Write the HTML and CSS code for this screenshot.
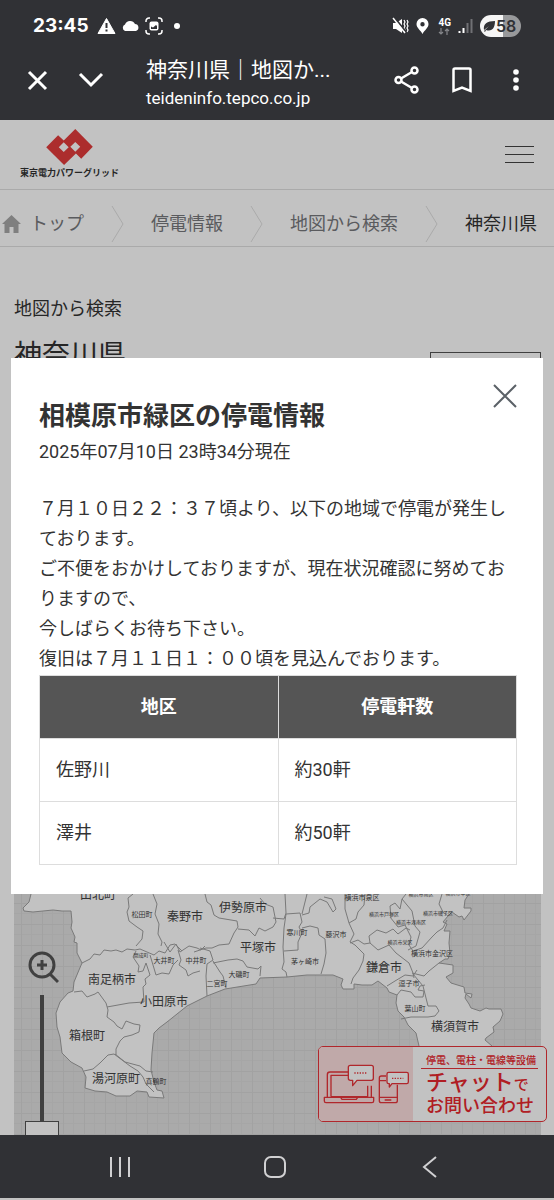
FILE: index.html
```html
<!DOCTYPE html>
<html lang="ja">
<head>
    <meta charset="UTF-8">
    <meta name="viewport" content="width=device-width, initial-scale=1.0">
    <title>神奈川県｜地図から検索</title>
    <link rel="stylesheet" href="styles.css">
</head>
<body>
    <div class="phone-top">
        <div class="status-bar">
            <span class="time">23:45</span>
            <svg width="19" height="18" viewBox="0 0 19 18"><path d="M9.500 1.500L18 16.500H1z" fill="#fff" stroke="#fff" stroke-linejoin="round"/><path d="M9.500 6v5M9.500 12.500v2" stroke="#303135" stroke-width="2"/></svg>
            <svg width="19" height="18" viewBox="0 0 19 18"><path d="M4 14a3.500 3.500 0 0 1 0-6.500 5.500 5.500 0 0 1 10-.5 3.600 3.600 0 0 1 1 7z" fill="#fff"/></svg>
            <svg width="18" height="18" viewBox="0 0 18 18"><path d="M1 5V4a3 3 0 0 1 3-3h1M13 1h1a3 3 0 0 1 3 3v1M17 13v1a3 3 0 0 1-3 3h-1M5 17H4a3 3 0 0 1-3-3v-1" fill="none" stroke="#fff" stroke-width="1.500"/><rect x="4.500" y="4.500" width="9" height="9" rx="2" fill="#fff"/><path d="M6 12V9.500l2 1 3-2.500 1 1v3z" fill="#303135"/></svg>
            <span class="dot"></span>
            <span class="status-right">
                <svg width="17" height="18" viewBox="0 0 17 18"><path d="M1 6h3l6-4v14l-6-4H1z" fill="#fff"/><path d="M12 3l1 2-1 2 1 2-1 2 1 2-1 2M15 3l1 2-1 2 1 2-1 2 1 2-1 2" fill="none" stroke="#fff" stroke-width="1.200"/><path d="M2 0l12 15" stroke="#303135" stroke-width="2"/><path d="M1 1l12 15" stroke="#fff" stroke-width="1.500"/></svg>
                <svg width="13" height="18" viewBox="0 0 13 18"><path fill-rule="evenodd" d="M6.500 1A6 6 0 0 0 .5 7c0 4 4 6 6 10 2-4 6-6 6-10a6 6 0 0 0-6-6zm0 4a2.200 2.200 0 1 1 0 4.400 2.200 2.200 0 0 1 0-4.400z" fill="#fff"/></svg>
                <span class="network">4G
                    <svg width="12" height="7" viewBox="0 0 12 7"><path d="M3 0v6M1 4l2 2 2-2M9 7V1M7 3l2-2 2 2" fill="none" stroke="#85868a" stroke-width="1.200"/></svg>
                </span>
                <svg width="15" height="18" viewBox="0 0 15 18"><path d="M1.500 14v2M5.500 11v5" stroke="#fff" stroke-width="2"/><path d="M9.500 6v10M13.500 2v14" stroke="#707175" stroke-width="2"/></svg>
                <span class="battery">
                    <svg width="12" height="12" viewBox="0 0 12 12"><path d="M1 10C0 4 4 1 12 1c0 7-3 11-9 9l-1 2-1-1 5-5z" fill="#303135"/></svg>58
                </span>
            </span>
        </div>
        <div class="browser-bar">
            <button type="button" aria-label="閉じる"><svg width="24" height="24" viewBox="0 0 24 24"><path d="M4 4l17 17M21 4L4 21"/></svg></button>
            <button type="button" aria-label="最小化"><svg width="28" height="24" viewBox="0 0 28 24"><path d="M3 6l11 11L25 6"/></svg></button>
            <div class="page-title">
                <div class="title">神奈川県｜地図か...</div>
                <div class="url">teideninfo.tepco.co.jp</div>
            </div>
            <div class="browser-actions">
                <button type="button" aria-label="共有"><svg width="26" height="28" viewBox="0 0 26 28"><g stroke-width="2.500"><path d="M7 12.500L18 6M7 15.500L18 22"/><circle cx="4.500" cy="14" r="3"/><circle cx="20.500" cy="4.500" r="3"/><circle cx="20.500" cy="23.500" r="3"/></g></svg></button>
                <button type="button" aria-label="ブックマーク"><svg width="20" height="26" viewBox="0 0 20 26"><path d="M1.500 3q0-1.500 1.500-1.500h14q1.500 0 1.500 1.500v21L10 20.500 1.500 24z" stroke-width="2.500"/></svg></button>
                <button type="button" aria-label="メニュー"><svg width="6" height="24" viewBox="0 0 6 24"><g fill="#fff" stroke="none"><circle cx="3" cy="4" r="2.800"/><circle cx="3" cy="12" r="2.800"/><circle cx="3" cy="20" r="2.800"/></g></svg></button>
            </div>
        </div>
    </div>

    <div class="screen">
        <header class="site-header">
            <a href="#" class="logo">
                <svg width="47" height="36" viewBox="0 0 141 109"><path fill-rule="evenodd" d="M0 55L36 19 53 35 88 0 141 54 106 90 90 74 54 109zM38 55L53 70 68 55 53 40zM73 54L88 69 103 54 88 39z" fill="#e23c3c"/></svg>
                <span>東京電力パワーグリッド</span>
            </a>
            <button type="button" class="hamburger" aria-label="メニュー"><span></span><span></span><span></span></button>
        </header>

        <nav class="breadcrumb">
            <a href="#" class="home"><svg width="19" height="18" viewBox="0 0 19 18"><path d="M9.500 0L19 9h-2.500v9h-5v-6h-4v6h-5V9H0z"/></svg>トップ</a>
            <svg width="13" height="38" viewBox="0 0 13 38"><path d="M1 1l11 18L1 37"/></svg>
            <a href="#">停電情報</a>
            <svg width="13" height="38" viewBox="0 0 13 38"><path d="M1 1l11 18L1 37"/></svg>
            <a href="#">地図から検索</a>
            <svg width="13" height="38" viewBox="0 0 13 38"><path d="M1 1l11 18L1 37"/></svg>
            <span>神奈川県</span>
        </nav>

        <main class="content">
            <p class="sub">地図から検索</p>
            <div class="heading-row">
                <h1>神奈川県</h1>
                <button type="button" class="update">更新</button>
            </div>

            <div class="map">
                <svg class="map-image" viewBox="14 440 527 720">
                    <defs>
                        <pattern id="grid" width="21" height="21" patternUnits="userSpaceOnUse">
                            <path d="M10.500 0v21M0 10.500h21" stroke="#dbdbdb" fill="none"/>
                            <path d="M.5 0v21M0 .5h21" stroke="#d5d5d5" fill="none"/>
                        </pattern>
                    </defs>
                    <rect x="14" y="440" width="527" height="720" fill="#e0e0e0"/>
                    <rect x="14" y="440" width="527" height="720" fill="url(#grid)"/>
                    <path class="land" d="M40 600L31 894 29 902 23 908 24 911 33 912 53 910 62 911 71 911 72 922 71 928 75 937 74 942 77 943 77 953 82 963 79 970 74 982 73 991 68 993 60 1002 56 1013 57 1027 60 1037 62 1053 71 1062 82 1068 86 1077 85 1088 95 1091 107 1092 116 1096 130 1096 137 1091 147 1092 149 1097 164 1098 162 1091 157 1090 154 1082 151 1070 152 1053 154 1033 159 1028 167 1022 187 1006 207 996 225 989 256 984 260 978 287 977 307 975 333 975 343 979 341 985 343 989 354 989 354 984 362 985 372 985 378 981 387 988 389 992 397 995 396 1003 398 1011 404 1017 408 1025 416 1033 419 1046 430 1065 480 1062 492 1046 485 1040 486 1038 494 1032 493 1027 500 1021 503 1014 501 1009 489 1009 486 1008 480 1011 471 1008 469 1004 465 998 466 994 471 998 472 994 465 993 464 987 451 983 446 977 453 973 453 965 439 963 445 959 448 959 450 953 449 943 450 931 444 931 447 924 443 922 448 916 452 912 459 917 462 916 464 920 471 911 471 908 464 908 465 900 469 894 475 600z"/>
                    <g class="border">
                        <path d="M133 894l-5 4 1 9-2 5 2 9 8 6 6 4-1 8-6 7M153 894l4 10-2 10 4 10-1 10 4 8-1 4M82 963l8-4 4-5 6 1 4-5 7 1 5-1 6 2 5-3 8 1 5-1 7 3 7 3 5-4 6 2 5-8 5-1 7 7M136 951l-3 6 6 9-1 6 5-1 3-8 4 12-5 4 1 5-3 3 1 15-15 1-22 4M74 992l8-1 5 6 8-3 3-2 8 11 2 7-1 7 7 5 3 4 5 3 4-8 8 3 6 1-1 7-7 3-8 2-4 4-4 8 0 6M150 955l6 20 6-2 7 1 4-9 5-5M164 942l6 10 6-8 4 8 9-6 8 2 4 2 4-4M178 950l3 10-2 5 7 5 2 6 5-3 7-2M84 1071l9-2 7-6 8-8 6-1 16 12 8 5 5 6 3 7 8 8M115 1054l10 8 15 4 6 5 7 1"/>
                        <path d="M205 894l2 8 4 3 3 10 5 3 18 3 1 6-4 6-5 11-10 1-7 3-6 0-12 4M238 929l11 1 6 6 4-8 6 3 8-4 3-5-3-15-8-3-5-6M273 918l11 1 2-6-1-19M286 914l-2 14-1 19 1 15-2 7 4 3 1 5M286 914l14-1 2 9-3 5 3 6-4 9 0 8-14 1M200 948l10 3 3 9-6 4-1 12 1 20M213 961l7 11 3 4 3 12M213 963l15-3 9-1 6 2 4 6 11 2 3-3-1 10M302 915l7-2 1-6 10-8 7 3 6 10 3-3-4-10-8-2M302 928l8-2 8 2 1 7 6 4 1 14-2 11-3 10M307 894l-5 20M345 894l0 15 4 14 5 11-4 8 5 3 9 9-1 7-4 9-6 8-2 6"/>
                        <path d="M349 923l7-4 2-7 6-7 1-11M350 943l8-3 6 4 6-1-1-7 8-6 9 3 7-4 5 5 8-6 4 2M370 943l8 7 11-5 7 8 13 10 4 10 1 5M391 918l-1-12 5-3 5 6 2-10 4-5M390 917l8 10 7-2 6 12-2 8 4 6 9-3 10-11 5-5 6-4 4-8M402 899l10 12 3 15 5 6-4 14-8 4M412 973l12 3 5-5 10-8M387 986l8-5 10-6 8 1 4-6M413 974l10 12 5 20 8 0 3 5-4 5-7 1-17 0-10 2M397 995l4-5 10 2 4 5 8 0 1-6-6-1 2-4 5-1M442 894l-3 10 4 8 5 4"/>
                    </g>
                    <g class="city">
                        <text x="98" y="899">山北町</text>
                        <text x="185" y="921">秦野市</text>
                        <text x="243" y="912">伊勢原市</text>
                        <text x="258" y="952">平塚市</text>
                        <text x="112" y="984">南足柄市</text>
                        <text x="164" y="1006">小田原市</text>
                        <text x="87" y="1040">箱根町</text>
                        <text x="116" y="1083">湯河原町</text>
                        <text x="384" y="972">鎌倉市</text>
                        <text x="455" y="1031">横須賀市</text>
                    </g>
                    <g class="town">
                        <text x="142" y="917">松田町</text>
                        <text x="164" y="963">大井町</text>
                        <text x="196" y="963">中井町</text>
                        <text x="217" y="986">二宮町</text>
                        <text x="239" y="977">大磯町</text>
                        <text x="156" y="1084">真鶴町</text>
                        <text x="297" y="935">寒川町</text>
                        <text x="336" y="937">藤沢市</text>
                        <text x="305" y="964">茅ヶ崎市</text>
                        <text x="362" y="900">横浜市泉区</text>
                        <text x="432" y="956">横浜市金沢区</text>
                        <text x="409" y="986">逗子市</text>
                        <text x="415" y="1011">葉山町</text>
                    </g>
                    <g class="ward">
                        <text x="141" y="957">開成町</text>
                        <text x="384" y="916">横浜市戸塚区</text>
                        <text x="411" y="924">横浜市港南区</text>
                        <text x="438" y="915">横浜市磯子区</text>
                        <text x="400" y="944">横浜市栄区</text>
                        <text x="421" y="896">横浜市南区</text>
                        <text x="458" y="895">横浜市中区</text>
                    </g>
                </svg>
                <div class="map-controls">
                    <button type="button" aria-label="拡大"><svg width="34" height="34" viewBox="0 0 34 34"><g fill="none" stroke="#555" stroke-width="3"><circle cx="17" cy="15" r="12"/><path d="M25 24l8 8M17 10v10M12 15h10"/></g></svg></button>
                    <input type="range" min="0" max="10" value="0" aria-label="地図の縮尺">
                </div>
            </div>
        </main>

        <a href="#" class="chat">
            <span class="chat-icon">
                <svg width="86" height="42" viewBox="0 0 258 126">
                    <g fill="none" stroke="#e8343a" stroke-width="4" stroke-linejoin="round">
                        <path d="M13 103V35q0-8 8-8h55M145 68v35M24 101V37h52M134 68v33H24"/>
                        <path d="M4 103h148v11q0 5-5 5H9q-5 0-5-5zM53 103l4 6h43l4-6"/>
                        <path d="M82 7h63q6 0 6 6v33q0 6-6 6h-43L89 68V52h-7q-6 0-6-6V13q0-6 6-6z" fill="#fff"/>
                        <path d="M189 39h-14q-6 0-6 6v68q0 6 6 6h42q6 0 6-6V65M169 53h20M169 103h54M185 111h20"/>
                        <path d="M197 28h54q5 0 5 5v24q0 5-5 5h-44l-8 10V62h-2q-5 0-5-5V33q0-5 5-5z" fill="#fff"/>
                        <path d="M94 30h38M207 46h34" stroke-dasharray="4 4"/>
                    </g>
                </svg>
            </span>
            <span class="chat-text">
                <small>停電、電柱・電線等設備</small>
                <strong>チャット<em>で</em></strong>
                <b>お問い合わせ</b>
            </span>
        </a>

        <div class="overlay">
            <div class="modal" role="dialog" aria-labelledby="modal-title">
                <button type="button" class="close" aria-label="閉じる"><svg width="24" height="24" viewBox="0 0 24 24"><path d="M1 1l22 22M23 1L1 23" stroke="#5b6167" stroke-width="2"/></svg></button>
                <h2 id="modal-title">相模原市緑区の停電情報</h2>
                <p class="date">2025年07月10日 23時34分現在</p>
                <p class="message">７月１０日２２：３７頃より、以下の地域で停電が発生しております。<br>ご不便をおかけしておりますが、現在状況確認に努めておりますので、<br>今しばらくお待ち下さい。<br>復旧は７月１１日１：００頃を見込んでおります。</p>
                <table>
                    <thead>
                        <tr><th>地区</th><th>停電軒数</th></tr>
                    </thead>
                    <tbody>
                        <tr><td>佐野川</td><td>約30軒</td></tr>
                        <tr><td>澤井</td><td>約50軒</td></tr>
                    </tbody>
                </table>
            </div>
        </div>
    </div>

    <div class="nav-bar">
        <button type="button" aria-label="履歴"><svg width="24" height="24" viewBox="0 0 24 24"><path d="M3 2v20M12 2v20M21 2v20"/></svg></button>
        <button type="button" aria-label="ホーム"><svg width="24" height="24" viewBox="0 0 24 24"><rect x="2" y="2" width="20" height="20" rx="6"/></svg></button>
        <button type="button" aria-label="戻る"><svg width="24" height="24" viewBox="0 0 24 24"><path d="M18 2L6 12l12 10"/></svg></button>
    </div>
</body>
</html>
```
FILE: styles.css
```css
* {
    box-sizing: border-box;
}
body {
    font-family: Roboto, "Noto Sans CJK JP", sans-serif;
    font-size: 18px;
    line-height: 30px;
    color: #333;
    background-color: #c2c2c2;
    margin: 0;
    padding-bottom: 2px;
    height: 100vh;
    display: flex;
    flex-direction: column;
}
h1, h2, p {
    margin: 0;
}
a {
    color: inherit;
    text-decoration: none;
}
button {
    background: none;
    border: none;
    padding: 0;
    font: inherit;
    color: inherit;
    cursor: pointer;
}
svg {
    display: block;
    flex-shrink: 0;
}

/* barras del teléfono */
.phone-top {
    background-color: #303135;
    color: white;
    height: 120px;
    flex-shrink: 0;
    padding-top: 12px;
}
.status-bar {
    display: flex;
    align-items: center;
    gap: 5px;
    height: 28px;
    padding: 0 33px;
}
.time {
    font-family: Inter, sans-serif;
    font-size: 19px;
    font-weight: 700;
    margin-right: 3px;
}
.dot {
    width: 6px;
    height: 6px;
    border-radius: 50%;
    background-color: white;
    margin-left: 6px;
}
.status-right {
    display: flex;
    align-items: center;
    gap: 7px;
    margin-left: auto;
}
.network {
    font-size: 10px;
    font-weight: bold;
    line-height: 10px;
    text-align: center;
    margin-left: 2px;
}
.battery {
    display: flex;
    align-items: center;
    height: 22px;
    width: 41px;
    padding-left: 3px;
    border-radius: 11px;
    background: linear-gradient(90deg, #f5f5f5 56%, #98999b 56%);
    color: #303135;
    font-family: Inter, sans-serif;
    font-size: 16px;
    font-weight: 600;
    gap: 1px;
}
.browser-bar {
    display: flex;
    align-items: center;
    height: 80px;
    padding: 0 35px 0 25px;
}
.browser-bar svg {
    fill: none;
    stroke: white;
    stroke-width: 3;
}
.browser-bar button + button {
    margin-left: 28px;
}
.page-title {
    margin-left: 41px;
    padding-top: 6px;
    white-space: nowrap;
}
.page-title .title {
    font-size: 21px;
}
.page-title .url {
    font-size: 17px;
    line-height: 26px;
}
.browser-actions {
    display: flex;
    align-items: center;
    margin-left: auto;
}
.browser-actions button + button {
    margin-left: 32px;
}
.browser-actions button:last-child {
    margin-left: 41px;
}
.nav-bar {
    display: flex;
    align-items: center;
    justify-content: space-around;
    background-color: #303135;
    height: 63px;
    flex-shrink: 0;
    padding: 0 46px 0 42px;
}
.nav-bar svg {
    fill: none;
    stroke: #d0d0d2;
    stroke-width: 2;
}

/* página */
.screen {
    position: relative;
    flex: 1;
    min-height: 0;
    overflow: hidden;
    background-color: white;
}
.site-header {
    display: flex;
    justify-content: space-between;
    align-items: center;
    height: 70px;
    padding: 0 20px;
    border-bottom: 1px solid #e0e0e0;
}
.logo {
    display: flex;
    flex-direction: column;
    align-items: center;
    font-size: 9px;
    line-height: 16px;
    font-weight: bold;
}
.hamburger {
    display: flex;
    flex-direction: column;
    gap: 7px;
    width: 29px;
}
.hamburger span {
    height: 1px;
    background-color: #444;
}
.breadcrumb {
    display: flex;
    align-items: center;
    gap: 27px;
    height: 57px;
    padding: 12px 2px 0;
    border-bottom: 1px solid #e0e0e0;
    color: #77787c;
    white-space: nowrap;
}
.breadcrumb svg path {
    stroke: #e0e0e0;
    fill: none;
}
.breadcrumb .home {
    display: flex;
    align-items: center;
    gap: 9px;
}
.breadcrumb .home path {
    fill: #a8a8a8;
    stroke: none;
}
.breadcrumb span {
    color: #333;
}
.content {
    padding: 47px 13px 0 14px;
}
.heading-row {
    display: flex;
    justify-content: space-between;
    align-items: flex-start;
    padding-top: 12px;
    height: 116px;
}
h1 {
    font-size: 28px;
    font-weight: normal;
    line-height: 40px;
}
.update {
    border: 1px solid #555;
    width: 111px;
    height: 50px;
    margin-top: 16px;
}
.map {
    position: relative;
}
.map-image {
    width: 100%;
    font-family: "Noto Sans CJK JP", sans-serif;
    text-anchor: middle;
    fill: #444;
}
.land {
    fill: white;
    stroke: #a0a0a0;
}
.border {
    fill: none;
    stroke: #a0a0a0;
}
.city {
    font-size: 12px;
}
.town {
    font-size: 7px;
}
.ward {
    font-size: 5px;
}
.map-controls {
    position: absolute;
    left: 11px;
    top: 510px;
    display: flex;
    flex-direction: column;
    align-items: center;
    gap: 11px;
}
.map-controls input {
    appearance: none;
    writing-mode: vertical-lr;
    direction: rtl;
    width: 34px;
    height: 155px;
    margin: 0;
    background: linear-gradient(#555, #555) center / 4px 100% no-repeat;
}
.map-controls input::-webkit-slider-thumb {
    appearance: none;
    width: 34px;
    height: 29px;
    background-color: white;
    border: 1px solid #555;
}
.chat {
    position: absolute;
    right: 7px;
    bottom: 13px;
    display: flex;
    height: 76px;
    width: 229px;
    border: 1px solid #e8343a;
    border-radius: 5px;
    background-color: white;
    color: #e8282e;
    font-weight: 500;
    overflow: hidden;
}
.chat-icon {
    display: flex;
    align-items: center;
    justify-content: center;
    width: 94px;
    background-color: #fddede;
}
.chat-text {
    flex: 1;
    padding: 7px 8px 0;
    white-space: nowrap;
}
.chat-text small {
    display: block;
    font-size: 10px;
    line-height: 14px;
    padding-left: 5px;
    border-bottom: 1px solid #e8343a;
}
.chat-text strong, .chat-text b {
    display: block;
    padding-left: 5px;
    font-size: 18px;
    line-height: 22px;
    font-weight: 500;
}
.chat-text strong {
    font-size: 22px;
    line-height: 28px;
    height: 26px;
}
.chat-text em {
    font-size: 15px;
    font-style: normal;
}

/* ventana de aviso */
.overlay {
    position: absolute;
    inset: 0;
    display: flex;
    align-items: center;
    padding: 0 11px 3px;
    background-color: rgba(0, 0, 0, 0.24);
}
.modal {
    position: relative;
    flex: 1;
    background-color: white;
    padding: 40px 26px 29px 28px;
}
.modal h2 {
    font-size: 26px;
    line-height: 36px;
}
.date {
    padding-top: 3px;
}
.message {
    padding: 27px 0 1px;
}
.close {
    position: absolute;
    top: 26px;
    right: 26px;
}
table {
    width: 100%;
    border-collapse: collapse;
    table-layout: fixed;
}
th, td {
    padding: 16px;
    border: 1px solid #ddd;
    text-align: left;
}
th {
    background-color: #555;
    color: white;
    text-align: center;
}
```
